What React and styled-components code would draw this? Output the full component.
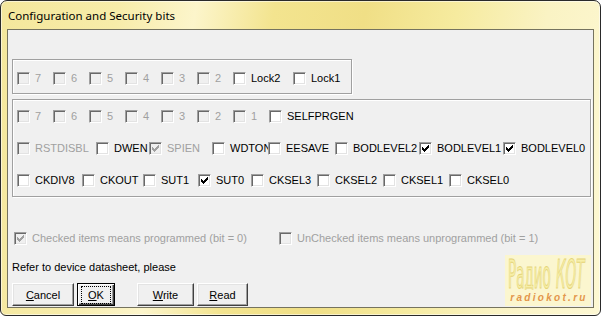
import styled, { createGlobalStyle } from "styled-components";

const GlobalStyle = createGlobalStyle`
  html, body {
    margin: 0;
    padding: 0;
  }
  body {
    background: #fff;
    font-family: "Liberation Sans", Arial, sans-serif;
    font-size: 11px;
  }
`;

const Window = styled.div`
  box-sizing: border-box;
  width: 601px;
  height: 316px;
  display: flex;
  flex-direction: column;
  border: 1px solid #2a2a2a;
  border-radius: 7px 7px 6px 6px;
  box-shadow: inset 0 0 0 1px rgba(255, 255, 255, 0.55);
  background: linear-gradient(
    100deg,
    #f4e79c 0%,
    #f7eca9 18%,
    #fcf5cb 30%,
    #f3e48f 42%,
    #f0df86 56%,
    #f6eb9f 70%,
    #faf3c4 84%,
    #fdf8d3 100%
  );
  overflow: hidden;
`;

const TitleBar = styled.div`
  height: 28px;
  flex: none;
  padding-left: 7px;
  line-height: 29px;
  font-family: "Noto Sans", "Open Sans", sans-serif;
  font-size: 11.5px;
  color: #000;
  white-space: nowrap;
`;

const Client = styled.div`
  position: relative;
  flex: 1;
  margin: 0 6px 7px 6px;
  padding: 29px 2px 0 4px;
  border: 1px solid #75735f;
  background: #f0f0f0;
  display: flex;
  flex-direction: column;
`;

const Group = styled.div`
  box-sizing: border-box;
  width: ${(p) => p.$width}px;
  height: ${(p) => p.$height}px;
  padding: ${(p) => p.$padTop}px 0 0 4px;
  margin-top: ${(p) => p.$gap || 0}px;
  border: 1px solid #a0a0a0;
  box-shadow: inset 1px 1px 0 #fff, 1px 1px 0 #fff;
`;

const Row = styled.div`
  display: flex;
  align-items: center;
  height: ${(p) => p.$height}px;
  overflow: hidden;
`;

const Item = styled.label`
  display: flex;
  align-items: center;
  gap: 5px;
  flex: none;
  width: ${(p) => (p.$w ? `${p.$w}px` : "auto")};
  overflow: hidden;
  white-space: nowrap;
`;

const Box = styled.span`
  box-sizing: border-box;
  flex: none;
  display: flex;
  align-items: center;
  justify-content: center;
  width: 13px;
  height: 13px;
  background: ${(p) => (p.$disabled ? "#f0f0f0" : "#fff")};
  border-style: solid;
  border-width: 1px;
  border-color: #a0a0a0 #fff #fff #a0a0a0;
  box-shadow: inset 1px 1px 0 #696969, inset -1px -1px 0 #e3e3e3;
`;

const Label = styled.span`
  color: ${(p) => (p.$disabled ? "#a0a0a0" : "#000")};
  line-height: 13px;
`;

const InfoRow = styled.div`
  display: flex;
  align-items: center;
  height: 17px;
  margin: 33px 0 0 2px;
`;

const Note = styled.div`
  margin-top: 14px;
  line-height: 13px;
  color: #000;
`;

const Buttons = styled.div`
  display: flex;
  margin-top: 9px;
`;

const Button = styled.button`
  box-sizing: border-box;
  width: ${(p) => p.$w}px;
  height: 23px;
  margin-left: ${(p) => p.$gap || 0}px;
  padding: 0;
  display: flex;
  align-items: center;
  justify-content: center;
  font-family: "Liberation Sans", Arial, sans-serif;
  font-size: 11px;
  color: #000;
  background: #f0f0f0;
  border: 1px solid;
  border-color: #fff #404040 #404040 #fff;
  box-shadow: inset -1px -1px 0 #a0a0a0, inset 1px 1px 0 #e3e3e3;
  outline: none;
  ${(p) =>
    p.$default &&
    `
    border: 1px solid #000;
    box-shadow: inset 1px 1px 0 #fff, inset -1px -1px 0 #404040, inset -2px -2px 0 #a0a0a0;
  `}
`;

const Focus = styled.span`
  padding: 1px 6px;
  outline: 1px dotted #000;
  line-height: 14px;
`;

const Watermark = styled.div`
  position: absolute;
  right: 2px;
  bottom: 1px;
  width: 86px;
  height: 51px;
  box-sizing: border-box;
  padding-top: 3px;
  background: #fbf6cf;
  display: flex;
  flex-direction: column;
  align-items: center;
`;

const LogoSite = styled.div`
  margin-top: 2px;
  font-family: "Liberation Sans", Arial, sans-serif;
  font-size: 10px;
  line-height: 12px;
  font-style: italic;
  font-weight: bold;
  letter-spacing: 2.3px;
  margin-left: 2px;
  color: #e3964c;
  white-space: nowrap;
`;

function Logo() {
  return (
    <svg width="84" height="32" viewBox="0 0 84 32">
      <g
        transform="scale(1 2.55)"
        fontFamily="'DejaVu Sans Condensed', 'DejaVu Sans', sans-serif"
        fontSize="15"
        fill="#f7efa8"
        stroke="#e5d478"
        strokeWidth="0.4"
      >
        <text x="2" y="11.6">
          Радио
        </text>
        <text x="50" y="11.6" fontStyle="italic">
          КОТ
        </text>
      </g>
    </svg>
  );
}

function Tick({ disabled }) {
  return (
    <svg width="7" height="7" viewBox="0 0 7 7" shapeRendering="crispEdges">
      <path
        fill={disabled ? "#a0a0a0" : "#000"}
        d="M6 0h1v1h-1z M5 1h2v1h-2z M0 2h1v1h-1z M4 2h3v1h-3z M0 3h2v1h-2z M3 3h3v1h-3z M0 4h5v1h-5z M1 5h3v1h-3z M2 6h1v1h-1z"
      />
    </svg>
  );
}

function Check({ label, checked, disabled, w }) {
  return (
    <Item $w={w}>
      <Box $disabled={disabled}>{checked && <Tick disabled={disabled} />}</Box>
      <Label $disabled={disabled}>{label}</Label>
    </Item>
  );
}

const bits = (s) => [...s].map((n) => ({ label: n, disabled: true, w: 36 }));

const lockRow = [...bits("765432"), { label: "Lock2", w: 60 }, { label: "Lock1", w: 60 }];
const highRow = [...bits("7654321"), { label: "SELFPRGEN", w: 90 }];
const extRow = [
  { label: "RSTDISBL", disabled: true, w: 79 },
  { label: "DWEN", w: 53 },
  { label: "SPIEN", checked: true, disabled: true, w: 63 },
  { label: "WDTON", w: 56 },
  { label: "EESAVE", w: 67 },
  { label: "BODLEVEL2", w: 84 },
  { label: "BODLEVEL1", checked: true, w: 84 },
  { label: "BODLEVEL0", checked: true, w: 84 },
];
const lowRow = [
  { label: "CKDIV8", w: 65 },
  { label: "CKOUT", w: 61 },
  { label: "SUT1", w: 55 },
  { label: "SUT0", checked: true, w: 53 },
  { label: "CKSEL3", w: 66 },
  { label: "CKSEL2", w: 66 },
  { label: "CKSEL1", w: 66 },
  { label: "CKSEL0", w: 66 },
];

const renderRow = (items, height) => (
  <Row $height={height}>
    {items.map((it, i) => (
      <Check key={i} {...it} />
    ))}
  </Row>
);

export default function App() {
  return (
    <>
      <GlobalStyle />
      <Window>
        <TitleBar>Configuration and Security bits</TitleBar>
        <Client>
          <Group $width={340} $height={35} $padTop={3}>
            {renderRow(lockRow, 30)}
          </Group>
          <Group $width={579} $height={98} $padTop={0} $gap={5}>
            {renderRow(highRow, 32)}
            {renderRow(extRow, 32)}
            {renderRow(lowRow, 32)}
          </Group>
          <InfoRow>
            <Check label="Checked items means programmed (bit = 0)" checked disabled w={265} />
            <Check label="UnChecked items means unprogrammed (bit = 1)" disabled />
          </InfoRow>
          <Note>Refer to device datasheet, please</Note>
          <Buttons>
            <Button $w={62}>
              <span>
                <u>C</u>ancel
              </span>
            </Button>
            <Button $w={38} $gap={3} $default>
              <Focus>
                <u>O</u>K
              </Focus>
            </Button>
            <Button $w={57} $gap={22}>
              <span>
                <u>W</u>rite
              </span>
            </Button>
            <Button $w={51} $gap={3}>
              <span>
                <u>R</u>ead
              </span>
            </Button>
          </Buttons>
          <Watermark>
            <Logo />
            <LogoSite>radiokot.ru</LogoSite>
          </Watermark>
        </Client>
      </Window>
    </>
  );
}
